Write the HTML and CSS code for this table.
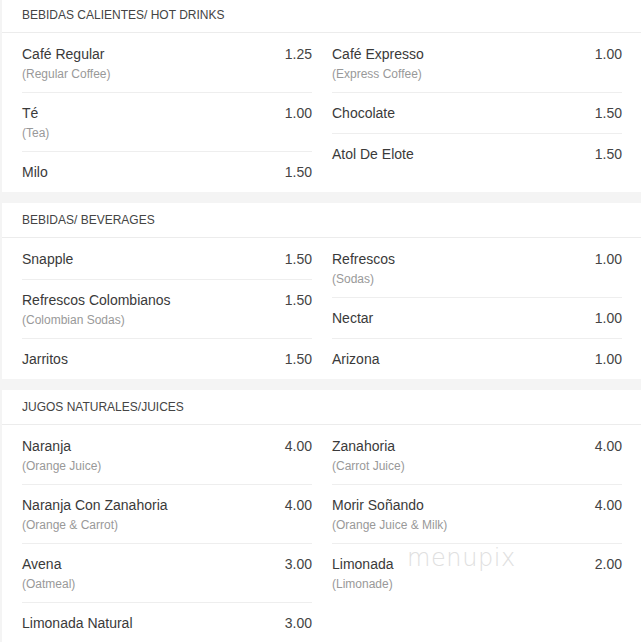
FILE: index.html
```html
<!DOCTYPE html>
<html lang="es">
<head>
<meta charset="utf-8">
<title>Menu</title>
<link rel="stylesheet" href="styles.css">
</head>
<body>
<div class="page">
  <section class="card">
    <h2 class="card-head">Bebidas Calientes/ Hot Drinks</h2>
    <div class="cols">
      <ul class="list">
        <li class="item"><div class="row"><span class="name">Café Regular</span><span class="price">1.25</span></div><div class="sub">(Regular Coffee)</div></li>
        <li class="item"><div class="row"><span class="name">Té</span><span class="price">1.00</span></div><div class="sub">(Tea)</div></li>
        <li class="item"><div class="row"><span class="name">Milo</span><span class="price">1.50</span></div></li>
      </ul>
      <ul class="list">
        <li class="item"><div class="row"><span class="name">Café Expresso</span><span class="price">1.00</span></div><div class="sub">(Express Coffee)</div></li>
        <li class="item"><div class="row"><span class="name">Chocolate</span><span class="price">1.50</span></div></li>
        <li class="item"><div class="row"><span class="name">Atol De Elote</span><span class="price">1.50</span></div></li>
      </ul>
    </div>
  </section>

  <section class="card">
    <h2 class="card-head">Bebidas/ Beverages</h2>
    <div class="cols">
      <ul class="list">
        <li class="item"><div class="row"><span class="name">Snapple</span><span class="price">1.50</span></div></li>
        <li class="item"><div class="row"><span class="name">Refrescos Colombianos</span><span class="price">1.50</span></div><div class="sub">(Colombian Sodas)</div></li>
        <li class="item"><div class="row"><span class="name">Jarritos</span><span class="price">1.50</span></div></li>
      </ul>
      <ul class="list">
        <li class="item"><div class="row"><span class="name">Refrescos</span><span class="price">1.00</span></div><div class="sub">(Sodas)</div></li>
        <li class="item"><div class="row"><span class="name">Nectar</span><span class="price">1.00</span></div></li>
        <li class="item"><div class="row"><span class="name">Arizona</span><span class="price">1.00</span></div></li>
      </ul>
    </div>
  </section>

  <section class="card">
    <h2 class="card-head">Jugos Naturales/Juices</h2>
    <div class="cols">
      <ul class="list">
        <li class="item"><div class="row"><span class="name">Naranja</span><span class="price">4.00</span></div><div class="sub">(Orange Juice)</div></li>
        <li class="item"><div class="row"><span class="name">Naranja Con Zanahoria</span><span class="price">4.00</span></div><div class="sub">(Orange &amp; Carrot)</div></li>
        <li class="item"><div class="row"><span class="name">Avena</span><span class="price">3.00</span></div><div class="sub">(Oatmeal)</div></li>
        <li class="item"><div class="row"><span class="name">Limonada Natural</span><span class="price">3.00</span></div></li>
      </ul>
      <ul class="list">
        <li class="item"><div class="row"><span class="name">Zanahoria</span><span class="price">4.00</span></div><div class="sub">(Carrot Juice)</div></li>
        <li class="item"><div class="row"><span class="name">Morir Soñando</span><span class="price">4.00</span></div><div class="sub">(Orange Juice &amp; Milk)</div></li>
        <li class="item"><div class="row"><span class="name">Limonada</span><span class="price">2.00</span></div><div class="sub">(Limonade)</div></li>
      </ul>
    </div>
    <div class="watermark">menupix</div>
  </section>
</div>
</body>
</html>
```

FILE: styles.css
```css
html, body {
  margin: 0;
  padding: 0;
  background: #f4f4f4;
}

body {
  font-family: "Liberation Sans", Arial, sans-serif;
  color: #333;
}

.page {
  display: flex;
  flex-direction: column;
  gap: 11px;
  margin-top: -2px;
  padding-left: 2px;
}

.card {
  position: relative;
  background: #fff;
}

.card-head {
  margin: 0;
  height: 34px;
  padding: 0 20px;
  display: flex;
  align-items: center;
  font-size: 12px;
  font-weight: normal;
  text-transform: uppercase;
  color: #444;
  border-bottom: 1px solid #ececec;
}

.cols {
  display: grid;
  grid-template-columns: 1fr 1fr;
  column-gap: 20px;
  padding: 0 19px 0 20px;
  align-items: start;
}

.list {
  list-style: none;
  margin: 0;
  padding: 0;
}

.item {
  border-top: 1px solid #eeeeee;
  padding: 11px 0;
}

.item:first-child {
  border-top-color: transparent;
}

.row {
  display: flex;
  justify-content: space-between;
  font-size: 14px;
  line-height: 18px;
  color: #3a3a3a;
}

.price {
  color: #444;
}

.sub {
  margin-top: 4px;
  font-size: 12px;
  line-height: 14px;
  color: #999;
}

.watermark {
  position: absolute;
  left: 405px;
  top: 154px;
  font-family: "DejaVu Sans", sans-serif;
  font-weight: 200;
  font-size: 24px;
  letter-spacing: 0.6px;
  color: #e0e0e0;
  pointer-events: none;
}
```
